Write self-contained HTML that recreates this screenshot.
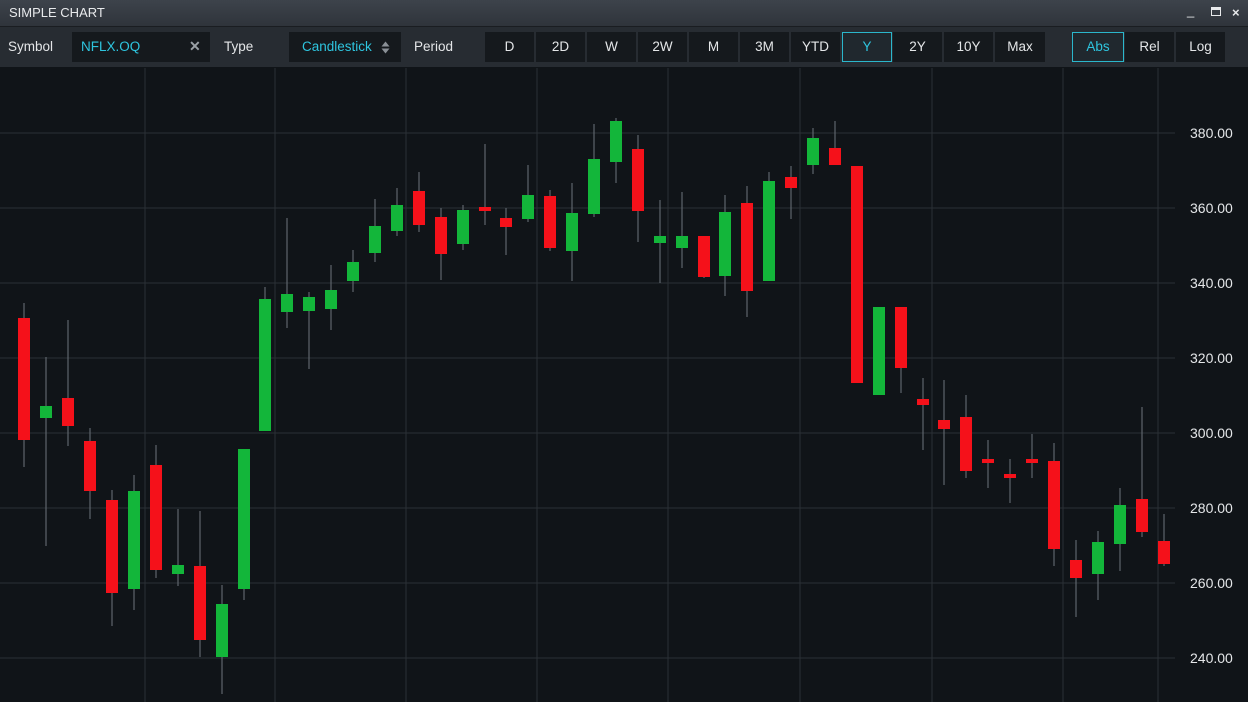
<!DOCTYPE html>
<html><head><style>
body{margin:0;width:1248px;height:702px;overflow:hidden;background:#101418;font-family:"Liberation Sans",sans-serif}
.title{position:absolute;left:0;top:0;width:1248px;height:26px;background:linear-gradient(#3d434b,#2f343b);border-bottom:1px solid #1a1d21;color:#e8eaec;font-size:13px;line-height:25px}
.tb{position:absolute;left:0;top:27px;width:1248px;height:40px;background:#272c32;color:#e4e6e8;font-size:13.5px}
.tb span{position:absolute;top:0;line-height:40px}
.box{position:absolute;top:5px;height:30px;background:#15191d;line-height:30px;text-align:center}
.cy{color:#2ec5df}
.sel{border:1px solid #2bb7cc;box-sizing:border-box;background:#20282e}
</style></head><body>
<div class="title"><span style="position:absolute;left:9px">SIMPLE CHART</span>
<span style="position:absolute;left:1187px;top:-2px;font-size:13px">_</span>
<div style="position:absolute;left:1211px;top:7px;width:10px;height:9px;border:1.5px solid #e8eaec;border-top-width:3px;box-sizing:border-box"></div>
<span style="position:absolute;left:1232px;font-weight:bold">×</span></div>
<div class="tb">
<span style="left:8px">Symbol</span>
<div class="box cy" style="left:72px;width:138px;text-align:left"><span style="left:9px;line-height:30px">NFLX.OQ</span><span style="left:117px;line-height:28px;color:#9aa0a6;font-weight:bold;font-size:14px">✕</span></div>
<span style="left:224px">Type</span>
<div class="box cy" style="left:289px;width:112px"><span style="left:13px;line-height:30px">Candlestick</span>
<svg style="position:absolute;left:92px;top:9px" width="9" height="13"><path d="M0.5 5.5L4.5 0.5L8.5 5.5Z M0.5 7.5L4.5 12.5L8.5 7.5Z" fill="#8a9096"/></svg></div>
<span style="left:414px">Period</span>
<div class="box" style="left:485px;width:49px">D</div>
<div class="box" style="left:536px;width:49px">2D</div>
<div class="box" style="left:587px;width:49px">W</div>
<div class="box" style="left:638px;width:49px">2W</div>
<div class="box" style="left:689px;width:49px">M</div>
<div class="box" style="left:740px;width:49px">3M</div>
<div class="box" style="left:791px;width:49px">YTD</div>
<div class="box sel cy" style="left:842px;width:50px;line-height:28px">Y</div>
<div class="box" style="left:893px;width:49px">2Y</div>
<div class="box" style="left:944px;width:49px">10Y</div>
<div class="box" style="left:995px;width:50px">Max</div>
<div class="box sel cy" style="left:1072px;width:52px;line-height:28px">Abs</div>
<div class="box" style="left:1125px;width:49px">Rel</div>
<div class="box" style="left:1176px;width:49px">Log</div>
</div>
<svg style="position:absolute;left:0;top:68px" width="1248" height="634" viewBox="0 68 1248 634">
<g stroke="#2a3036" stroke-width="1">
<line x1="0" y1="133" x2="1175" y2="133"/><line x1="0" y1="208" x2="1175" y2="208"/><line x1="0" y1="283" x2="1175" y2="283"/><line x1="0" y1="358" x2="1175" y2="358"/><line x1="0" y1="433" x2="1175" y2="433"/><line x1="0" y1="508" x2="1175" y2="508"/><line x1="0" y1="583" x2="1175" y2="583"/><line x1="0" y1="658" x2="1175" y2="658"/>
<line x1="145" y1="68" x2="145" y2="702"/><line x1="275" y1="68" x2="275" y2="702"/><line x1="406" y1="68" x2="406" y2="702"/><line x1="537" y1="68" x2="537" y2="702"/><line x1="668" y1="68" x2="668" y2="702"/><line x1="800" y1="68" x2="800" y2="702"/><line x1="932" y1="68" x2="932" y2="702"/><line x1="1063" y1="68" x2="1063" y2="702"/><line x1="1158" y1="68" x2="1158" y2="702"/>
</g>
<g fill="#e4e6e8" font-size="14" font-family="Liberation Sans">
<text x="1190" y="138">380.00</text><text x="1190" y="213">360.00</text><text x="1190" y="288">340.00</text><text x="1190" y="363">320.00</text><text x="1190" y="438">300.00</text><text x="1190" y="513">280.00</text><text x="1190" y="588">260.00</text><text x="1190" y="663">240.00</text>
</g>
<g id="c"></g>
</svg>
<script>
const d=[[24,'r',318,440,303,467],[46,'g',406,418,357,546],[68,'r',398,426,320,446],[90,'r',441,491,428,519],[112,'r',500,593,490,626],[134,'g',491,589,475,610],[156,'r',465,570,445,578],[178,'g',565,574,509,586],[200,'r',566,640,511,657],[222,'g',604,657,585,694],[244,'g',449,589,449,600],[265,'g',299,431,287,431],[287,'g',294,312,218,328],[309,'g',297,311,292,369],[331,'g',290,309,265,330],[353,'g',262,281,250,292],[375,'g',226,253,199,262],[397,'g',205,231,188,236],[419,'r',191,225,172,232],[441,'r',217,254,208,280],[463,'g',210,244,205,250],[485,'r',207,211,144,225],[506,'r',218,227,208,255],[528,'g',195,219,165,222],[550,'r',196,248,190,251],[572,'g',213,251,183,281],[594,'g',159,214,124,217],[616,'g',121,162,118,183],[638,'r',149,211,135,242],[660,'g',236,243,200,283],[682,'g',236,248,192,268],[704,'r',236,277,236,278],[725,'g',212,276,195,296],[747,'r',203,291,186,317],[769,'g',181,281,172,281],[791,'r',177,188,166,219],[813,'g',138,165,128,174],[835,'r',148,165,121,165],[857,'r',166,383,166,383],[879,'g',307,395,307,395],[901,'r',307,368,307,393],[923,'r',399,405,378,450],[944,'r',420,429,380,485],[966,'r',417,471,395,478],[988,'r',459,463,440,488],[1010,'r',474,477,459,503],[1032,'r',459,461,434,478],[1054,'r',461,549,443,566],[1076,'r',560,578,540,617],[1098,'g',542,574,531,600],[1120,'g',505,544,488,571],[1142,'r',499,532,407,537],[1164,'r',541,564,514,566]];
let s='';for(const[x,c,a,b,h,l]of d){s+=`<line x1="${x}" x2="${x}" y1="${h}" y2="${l}" stroke="#5f656b" stroke-width="1.2"/><rect x="${x-6}" y="${a}" width="12" height="${Math.max(b-a,4)}" fill="${c=='r'?'#f5111a':'#13b63a'}"/>`}
document.getElementById('c').innerHTML=s;
</script>
</body></html>
